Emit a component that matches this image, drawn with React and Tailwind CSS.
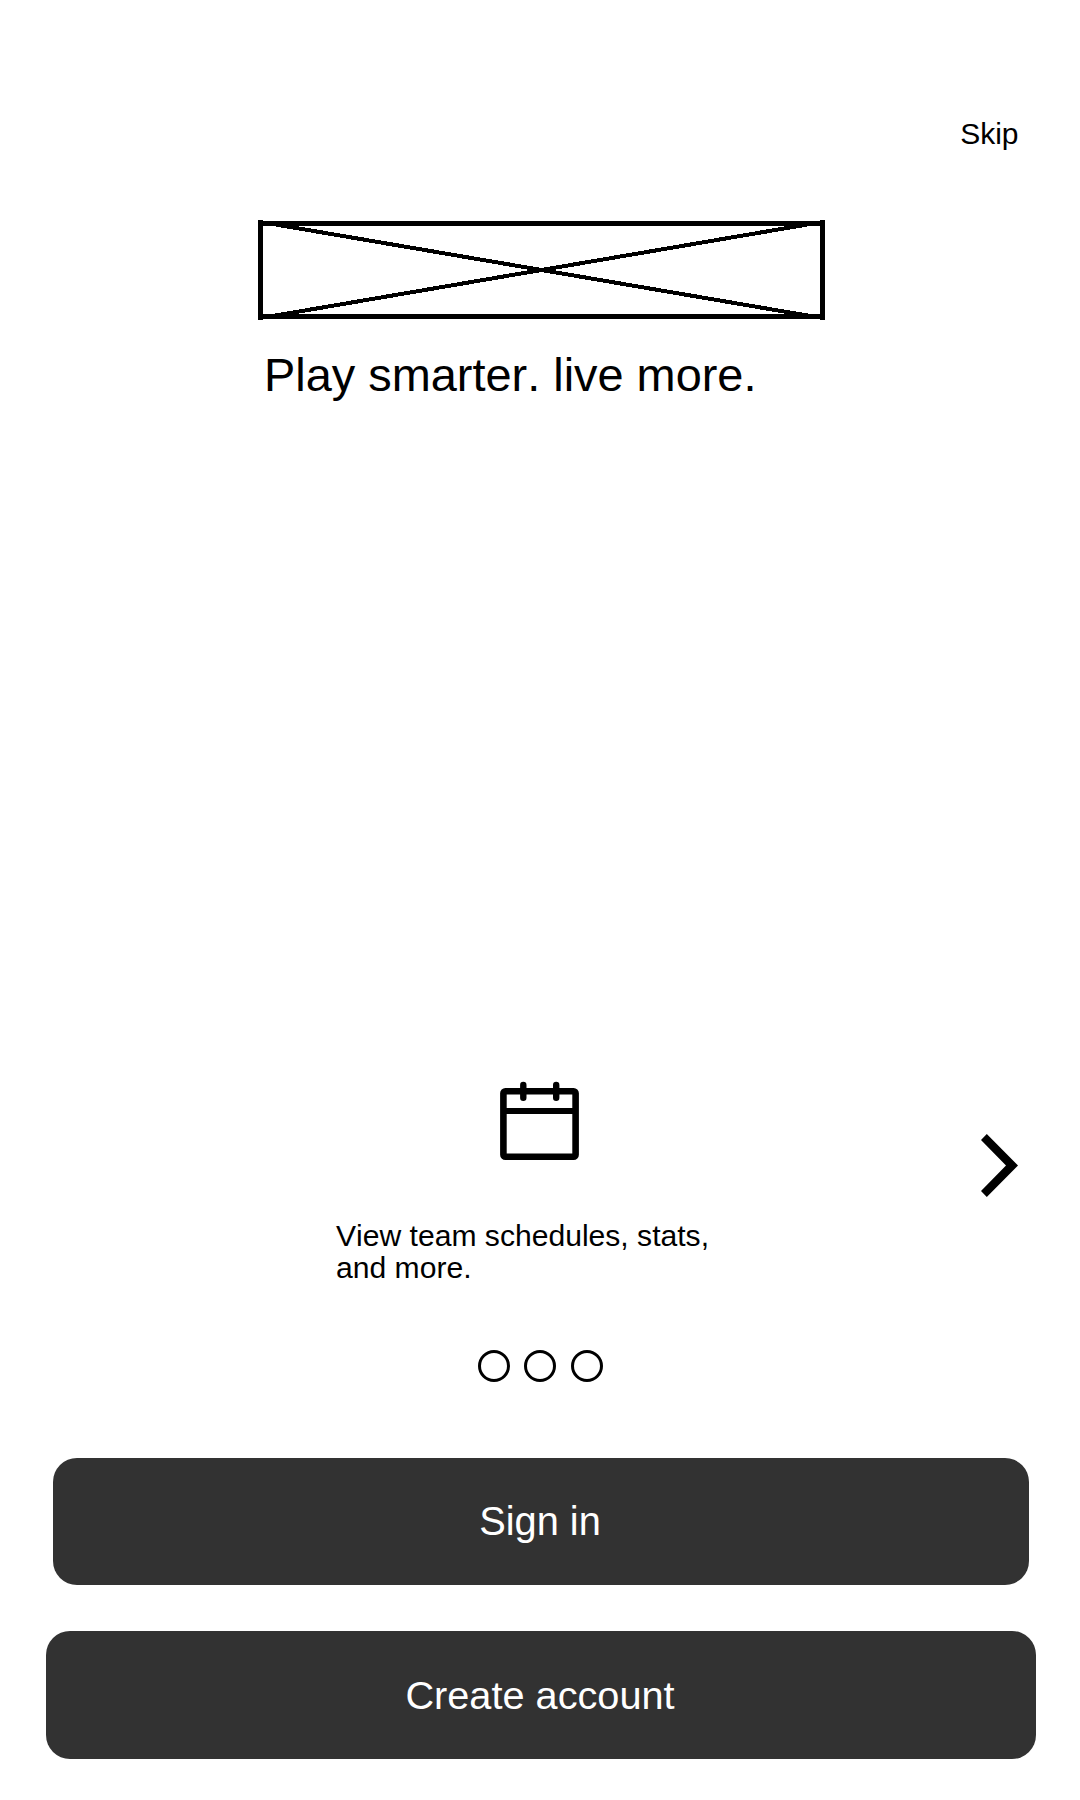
function LogoPlaceholder() {
  return (
    <svg className="ml-[257px] mt-[68px] block h-[103px] w-[569px]" viewBox="257 218 569 103" stroke="#000" fill="none" shapeRendering="crispEdges" aria-label="Logo">
      <path d="M258 223.5H825M258 316.5H825" strokeWidth="5" />
      <path d="M260.5 220V320M822.5 220V320" strokeWidth="5" />
      <path d="M264 222.5L819 317.5M264 317.5L819 222.5" strokeWidth="4" />
    </svg>
  );
}

function CalendarIcon() {
  return (
    <svg className="ml-[499px] block h-[80px] w-[82px]" viewBox="499 1081 82 80" stroke="#000" strokeWidth="6.6" fill="none">
      <rect x="503.4" y="1091.2" width="72.2" height="65.6" rx="2" />
      <path d="M504 1111H576" strokeWidth="6" />
      <path d="M523.3 1085V1097.8M556.2 1085V1097.8" strokeWidth="6.4" strokeLinecap="round" />
    </svg>
  );
}

function ChevronIcon() {
  return (
    <svg className="block h-[65px] w-[40px]" viewBox="980 1133 40 65">
      <path d="M986.8 1134L1018 1165.4L986.8 1197L981 1191L1006 1165.4L981 1140Z" />
    </svg>
  );
}

function Dot({ className = "" }) {
  return <span className={"block size-8 rounded-full border-[3px] border-black " + className} />;
}

export default function App() {
  return (
    <main className="flex h-[1800px] w-[1080px] flex-col overflow-hidden bg-white font-['Liberation_Sans',Arial,sans-serif] text-black [font-kerning:none]">
      <header className="flex justify-end pr-[61.5px] pt-[118px]">
        <button className="h-8 text-[30px] leading-8">Skip</button>
      </header>

      <LogoPlaceholder />
      <h1 className="ml-[264px] mt-[27px] h-[54px] whitespace-nowrap text-[46.9px] leading-[54px]">Play smarter. live more.</h1>

      <section className="mt-[679px] flex h-[204px] items-start">
        <div className="w-[980px] shrink-0">
          <CalendarIcon />
          <p className="ml-[336px] mt-[59px] whitespace-nowrap text-[30.1px] leading-8">
            View team schedules, stats,
            <br />
            and more.
          </p>
        </div>
        <button className="mt-[52px]" aria-label="Next">
          <ChevronIcon />
        </button>
      </section>

      <div className="ml-[478px] mt-[65px] flex h-8">
        <Dot />
        <Dot className="ml-[14px]" />
        <Dot className="ml-[15px]" />
      </div>

      <button className="ml-[53px] mt-[76px] h-[127px] w-[976px] shrink-0 rounded-3xl bg-[#323232] pr-[2px] text-[39.8px] text-white">Sign in</button>
      <button className="ml-[46px] mt-[46px] h-[128px] w-[990px] shrink-0 rounded-3xl bg-[#323232] pr-[2px] pt-[2px] text-[39.7px] text-white">Create account</button>
    </main>
  );
}
